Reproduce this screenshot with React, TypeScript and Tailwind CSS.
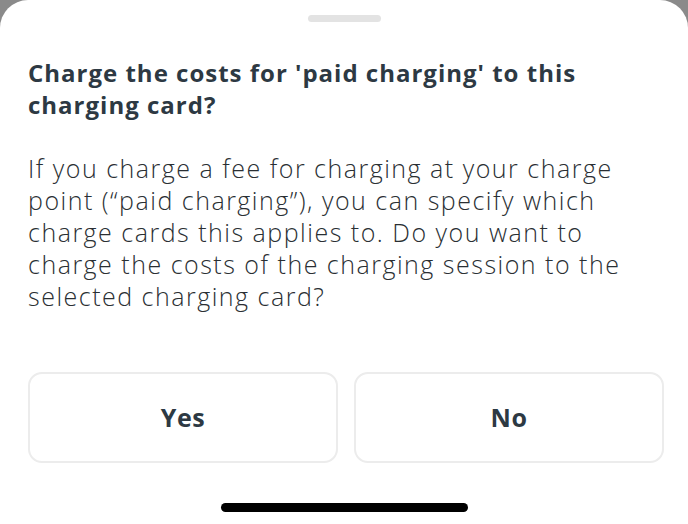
const App = () => {
    return (
        <div className="w-[688px] h-[524px] bg-[#8a8a8a] overflow-hidden font-['Open_Sans','Liberation_Sans',sans-serif]">
            <div className="h-full bg-white rounded-t-[28px] flex flex-col">
                <div className="flex justify-center pt-[15px]">
                    <div className="w-[73px] h-[7px] rounded-full bg-[#e3e3e3]" />
                </div>
                <div className="px-[28px] pt-[35px]">
                    <h2 className="text-[24px] leading-[32px] font-bold tracking-[1px] text-[#2d3943] whitespace-nowrap">
                        Charge the costs for 'paid charging' to this
                        <br />
                        charging card?
                    </h2>
                    <p className="mt-[31px] text-[25px] leading-[32px] font-light tracking-[1.5px] text-[#2a2f33] whitespace-nowrap">
                        If you charge a fee for charging at your charge
                        <br />
                        point (“paid charging”), you can specify which
                        <br />
                        charge cards this applies to. Do you want to
                        <br />
                        charge the costs of the charging session to the
                        <br />
                        selected charging card?
                    </p>
                </div>
                <div className="pl-[28px] pr-[24px] mt-[60px] grid grid-cols-2 gap-[16px]">
                    <button className="h-[91px] rounded-[14px] border-2 border-[#ececec] bg-white text-[25px] font-bold tracking-[0.5px] text-[#2d3943]">
                        Yes
                    </button>
                    <button className="h-[91px] rounded-[14px] border-2 border-[#ececec] bg-white text-[25px] font-bold tracking-[0.5px] text-[#2d3943]">
                        No
                    </button>
                </div>
                <div className="mt-auto mb-[12px] flex justify-center">
                    <div className="w-[247px] h-[9px] rounded-full bg-black" />
                </div>
            </div>
        </div>
    );
};

export default App;
